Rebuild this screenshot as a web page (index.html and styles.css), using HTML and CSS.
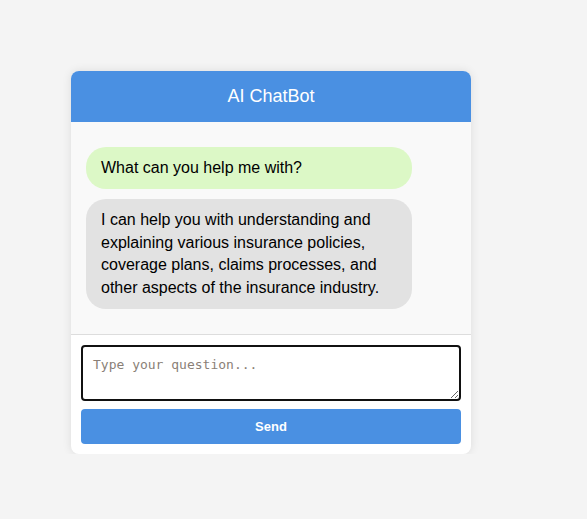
FILE: index.html
```html
<!DOCTYPE html>
<html>
<head>
<meta charset="utf-8">
<link rel="stylesheet" href="styles.css">
</head>
<body>
<div class="chat">
  <div class="header">AI ChatBot</div>
  <div class="messages">
    <div class="bubble user">What can you help me with?</div>
    <div class="bubble bot">I can help you with understanding and explaining various insurance policies, coverage plans, claims processes, and other aspects of the insurance industry.</div>
  </div>
  <div class="input-area">
    <textarea class="question" placeholder="Type your question..."></textarea>
    <button class="send">Send</button>
  </div>
</div>
</body>
</html>
```
FILE: styles.css
```css
html, body {
  margin: 0;
  background: #f4f4f4;
}
body {
  padding: 71px 0 0 71px;
  font-family: "Liberation Sans", Arial, sans-serif;
}
.chat {
  width: 400px;
  background: #fff;
  border-radius: 8px;
  box-shadow: 0 0 10px rgba(0,0,0,0.1);
  overflow: hidden;
}
.header {
  background: #4a90e2;
  color: #fff;
  font-size: 18px;
  text-align: center;
  height: 51px;
  line-height: 51px;
}
.messages {
  background: #f9f9f9;
  padding: 15px;
  border-bottom: 1px solid #ddd;
}
.bubble {
  max-width: 80%;
  padding: 10px 15px;
  margin: 10px 0;
  border-radius: 20px;
  font-size: 16px;
  line-height: 1.4;
  color: #000;
}
.user { background: #dcf8c6; }
.bot { background: #e2e2e2; }
.input-area {
  padding: 10px;
  display: flex;
  flex-direction: column;
  gap: 8px;
}
.question {
  box-sizing: border-box;
  width: 100%;
  height: 56px;
  border: 2px solid #111;
  border-radius: 4px;
  padding: 10px 10px;
  font-family: "DejaVu Sans Mono", monospace;
  font-size: 13px;
  resize: vertical;
  outline: none;
  margin: 0;
  display: block;
}
.question::placeholder { color: #8a7f77; }
.send {
  height: 35px;
  background: #4a90e2;
  color: #fff;
  border: none;
  border-radius: 4px;
  font-family: "Liberation Sans", Arial, sans-serif;
  font-weight: bold;
  font-size: 13px;
}
```
